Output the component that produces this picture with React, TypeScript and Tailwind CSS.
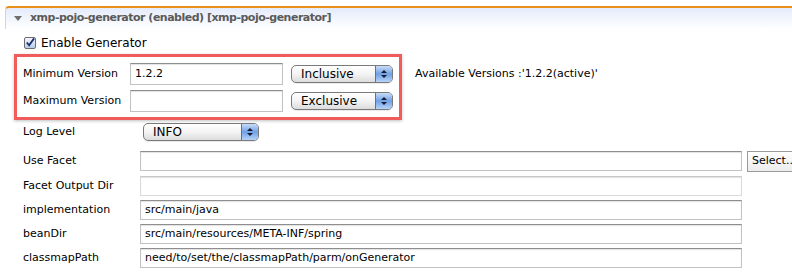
import React from "react";

const font = { fontFamily: '"DejaVu Sans", "Liberation Sans", sans-serif' };

function TextBox({ value = "", className = "" }: { value?: string; className?: string }) {
  return (
    <div
      className={`h-[20px] shrink-0 bg-white border border-[#c2c2c2] border-t-[#8e8e8e] shadow-[inset_0_1px_1px_rgba(0,0,0,0.12)] flex items-center px-[4px] text-[11px] text-black ${className}`}
    >
      {value}
    </div>
  );
}

function Popup({ value, className = "" }: { value: string; className?: string }) {
  return (
    <div
      className={`h-[18px] shrink-0 rounded-[5px] border border-[#7a7a7a] bg-gradient-to-b from-white via-[#f4f4f4] to-[#dcdcdc] flex items-center overflow-hidden shadow-[0_1px_0_rgba(0,0,0,0.08)] ${className}`}
    >
      <span className="flex-1 pl-[9px] text-[12px] text-black">{value}</span>
      <span className="h-full w-[17px] border-l border-[#5b6fa8] bg-gradient-to-b from-[#c9dcf7] via-[#6fa0e6] to-[#b7d3f8] flex flex-col items-center justify-center gap-[2px]">
        <svg width="6" height="3" viewBox="0 0 6 3">
          <path d="M0 3 L3 0 L6 3 Z" fill="#1a1a2e" />
        </svg>
        <svg width="6" height="3" viewBox="0 0 6 3">
          <path d="M0 0 L3 3 L6 0 Z" fill="#1a1a2e" />
        </svg>
      </span>
    </div>
  );
}

function Row({ label, children, className = "" }: { label: string; children: React.ReactNode; className?: string }) {
  return (
    <div className={`flex items-center h-[20px] ${className}`}>
      <span className="w-[117px] shrink-0 text-[11px] text-black">{label}</span>
      {children}
    </div>
  );
}

export default function App() {
  return (
    <div className="w-[792px] h-[273px] bg-white overflow-hidden relative" style={font}>
      <div className="ml-[5px] mt-[6px] h-[23px] border-t-2 border-l border-t-[#e8901a] border-l-[#e9d2b4] rounded-tl-[4px] bg-gradient-to-b from-[#e4ebfa] to-white flex items-center">
        <svg width="8" height="5" viewBox="0 0 8 5" className="ml-[8px] mr-[8px]">
          <path d="M0 0 L8 0 L4 5 Z" fill="#6e6e6e" />
        </svg>
        <span className="text-[11px] font-bold text-[#5a5a5a] tracking-[-0.5px]">
          xmp-pojo-generator (enabled) [xmp-pojo-generator]
        </span>
      </div>

      <div className="flex items-center ml-[24px] mt-[7px] h-[13px]">
        <span className="w-[12px] h-[12px] rounded-[2px] border border-[#6e6e6e] bg-gradient-to-b from-[#f4f8ff] to-[#b9cbe8] flex items-center justify-center">
          <svg width="11" height="11" viewBox="0 0 11 11">
            <path d="M2 5.5 L4.5 8.5 L10 1" fill="none" stroke="#1d2f6f" strokeWidth="2" />
          </svg>
        </span>
        <span className="ml-[5px] text-[12px] text-black">Enable Generator</span>
      </div>

      <div className="ml-[14px] mt-[5px] w-[388px] border-[3px] border-[#f05c5c] shadow-[0_1px_3px_rgba(0,0,0,0.25)] pt-[6px] pb-[5px] pl-[6px] flex flex-col gap-[5px]">
        <div className="flex items-center">
          <span className="w-[107px] shrink-0 text-[11px] text-black">Minimum Version</span>
          <TextBox value="1.2.2" className="w-[153px] h-[22px]" />
          <Popup value="Inclusive" className="ml-[8px] w-[102px]" />
        </div>
        <div className="flex items-center">
          <span className="w-[107px] shrink-0 text-[11px] text-black">Maximum Version</span>
          <TextBox className="w-[153px] h-[22px]" />
          <Popup value="Exclusive" className="ml-[8px] w-[102px]" />
        </div>
      </div>
      <span className="absolute left-[415px] top-[66px] text-[11px] text-black">Available Versions :'1.2.2(active)'</span>

      <div className="ml-[23px] mt-[2px] flex flex-col gap-[4px]">
        <Row label="Log Level" className="mb-[4px]">
          <Popup value="INFO" className="ml-[3px] w-[116px]" />
        </Row>
        <Row label="Use Facet" className="h-[22px]">
          <TextBox className="w-[602px]" />
          <button className="ml-[5px] h-[21px] shrink-0 px-[4px] border border-[#9a9a9a] bg-gradient-to-b from-white to-[#ececec] text-[11px] text-black whitespace-nowrap">
            Select...
          </button>
        </Row>
        <Row label="Facet Output Dir">
          <TextBox className="w-[602px] border-[#dadada] border-t-[#c8c8c8]" />
        </Row>
        <Row label="implementation">
          <TextBox value="src/main/java" className="w-[602px]" />
        </Row>
        <Row label="beanDir">
          <TextBox value="src/main/resources/META-INF/spring" className="w-[602px]" />
        </Row>
        <Row label="classmapPath">
          <TextBox value="need/to/set/the/classmapPath/parm/onGenerator" className="w-[602px]" />
        </Row>
      </div>
    </div>
  );
}
